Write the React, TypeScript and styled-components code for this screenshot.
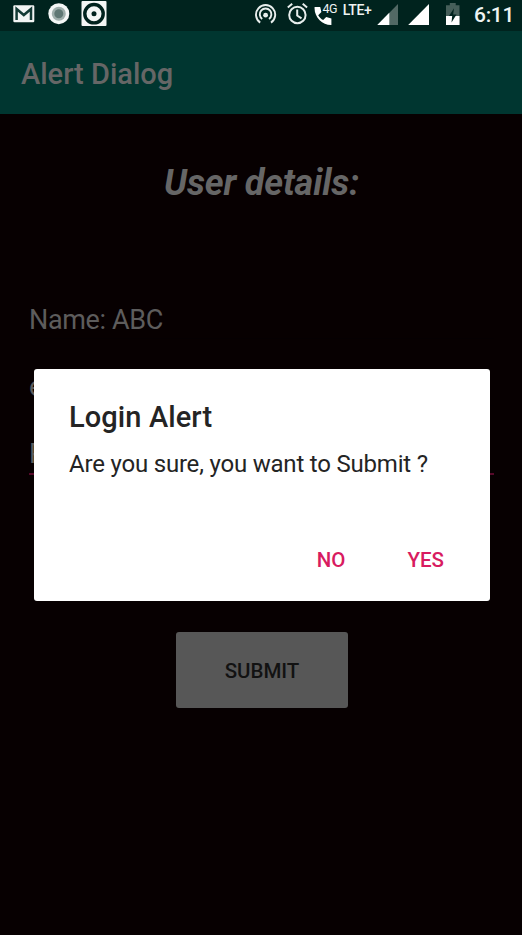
import React from 'react';
import styled, { createGlobalStyle } from 'styled-components';

const GlobalStyle = createGlobalStyle`
  * { box-sizing: border-box; }
  body { margin: 0; background: #070001; font-family: Roboto, "Noto Sans", sans-serif; }
`;

const Screen = styled.div`
  position: relative;
  width: 522px;
  height: 935px;
  overflow: hidden;
  background: #070001;
`;

const StatusBar = styled.header`
  display: flex;
  height: 31px;
  background: #00231e;
  color: #eef3f2;
`;

const StatusIcon = styled.svg<{ $gap: number }>`
  display: block;
  flex: none;
  height: 31px;
  margin-left: ${p => p.$gap}px;
`;

const StatusLabel = styled.span<{ $size: number; $gap: number; $top: number; $spacing?: number; $weight?: number }>`
  margin-left: ${p => p.$gap}px;
  padding-top: ${p => p.$top}px;
  font-size: ${p => p.$size}px;
  font-weight: ${p => p.$weight ?? 500};
  letter-spacing: ${p => p.$spacing ?? 0}px;
  line-height: 1;
  white-space: nowrap;
`;

const Cluster = styled.div<{ $width: number }>`
  display: flex;
  flex: none;
  width: ${p => p.$width}px;
`;

const AppBar = styled.div`
  display: flex;
  align-items: center;
  height: 83px;
  padding: 2px 21px 0;
  background: #003630;
`;

const AppTitle = styled.h1`
  margin: 0;
  color: #666;
  font-size: 29px;
  font-weight: 500;
  line-height: 34px;
`;

const Content = styled.main`
  display: flex;
  flex-direction: column;
  align-items: center;
  padding: 46px 28px 0 29px;
`;

const Heading = styled.h2`
  margin: 0 0 86px;
  color: #666;
  font-size: 36px;
  font-style: italic;
  font-weight: 700;
  letter-spacing: -0.15px;
  line-height: 46px;
`;

const Field = styled.div<{ $focused?: boolean }>`
  width: 100%;
  height: 67px;
  padding-top: 11px;
  color: #5d5c5c;
  font-size: 27px;
  letter-spacing: -0.35px;
  line-height: 34px;
  &::after {
    content: "";
    display: block;
    height: ${p => (p.$focused ? 2 : 1)}px;
    margin-top: ${p => (p.$focused ? 2 : 1)}px;
    background: ${p => (p.$focused ? '#57092a' : '#050002')};
  }
`;

const SubmitButton = styled.button`
  width: 172px;
  height: 76px;
  margin: 139px 0 0 1px;
  padding: 2px 0 0;
  border: 0;
  border-radius: 3px;
  background: #575757;
  color: #121212;
  font: 500 20.5px Roboto, sans-serif;
`;

const Dialog = styled.section`
  position: absolute;
  top: 369px;
  left: 34px;
  width: 456px;
  height: 232px;
  padding: 31px 35px 0;
  border-radius: 3px;
  background: #fff;
  color: #242424;
`;

const DialogTitle = styled.h2`
  margin: 0;
  font-size: 29px;
  font-weight: 500;
  letter-spacing: 0.1px;
  line-height: 34px;
`;

const Message = styled.p`
  margin: 14px 0 0;
  font-size: 24px;
  letter-spacing: -0.2px;
  line-height: 32px;
  white-space: nowrap;
`;

const Actions = styled.div`
  display: flex;
  justify-content: flex-end;
  gap: 62px;
  margin-top: 65px;
  padding-right: 11px;
`;

const Action = styled.button`
  padding: 0;
  border: 0;
  background: none;
  color: #d81b60;
  font: 500 20.5px/30px Roboto, sans-serif;
`;

const MailIcon = () => (
  <StatusIcon $gap={13} width="22" viewBox="0 0 22 31">
    <rect x="0.3" y="5.2" width="21" height="17" rx="1.2" fill="#f2f5f4" />
    <path d="M3.6 20V9l7.2 6 7.2-6v11" fill="none" stroke="#123a34" strokeWidth="2.5" />
  </StatusIcon>
);

const CircleIcon = () => (
  <StatusIcon $gap={13} width="22" viewBox="0 0 22 31">
    <circle cx="10.8" cy="13.7" r="10.5" fill="#f4f7f6" />
    <circle cx="10.8" cy="13.7" r="7" fill="#9fafac" />
    <circle cx="10.8" cy="13.7" r="4.5" fill="#5f7874" />
  </StatusIcon>
);

const DiscIcon = () => (
  <StatusIcon $gap={11} width="26" viewBox="0 0 26 31">
    <rect x="0.5" y="1" width="25" height="25" rx="1" fill="#f4f7f6" />
    <circle cx="13" cy="13.7" r="9.2" fill="none" stroke="#00231e" strokeWidth="3.4" />
    <circle cx="13" cy="13.7" r="2.5" fill="#00231e" />
  </StatusIcon>
);

const HotspotIcon = () => (
  <StatusIcon $gap={0} width="22" viewBox="0 0 22 31">
    <g fill="none" stroke="#e8eeed" strokeWidth="1.9">
      <path d="M5.2 22.6A9.6 9.6 0 1 1 16 22.6" />
      <path d="M7.2 19A5.8 5.8 0 1 1 14 19" />
    </g>
    <circle cx="10.6" cy="15.2" r="2.4" fill="#e8eeed" />
  </StatusIcon>
);

const AlarmIcon = () => (
  <StatusIcon $gap={10} width="22" viewBox="0 0 22 31">
    <g fill="none" stroke="#e8eeed" strokeWidth="2">
      <circle cx="10.4" cy="15" r="8.2" />
      <path d="M10.2 9.5v6l4.3 2.8M.8 7.4l4.4-3.6M15.7 3.8L20.1 7.4" />
    </g>
  </StatusIcon>
);

const CallIcon = () => (
  <StatusIcon $gap={5} width="18" viewBox="0 0 18 31">
    <path
      d="M.6 7h5.6l1.2 5-3.2 3.2c1.3 2.2 2.8 3.7 5 4.9l3-3 5.2 1.3V25C8.6 25.3-.2 17.2.6 7z"
      fill="#fff"
    />
  </StatusIcon>
);

const WeakSignalIcon = () => (
  <StatusIcon $gap={0} width="22" viewBox="0 0 22 31">
    <path d="M0.3 25L21 4v21z" fill="#526965" />
    <path d="M0.3 25L12.3 12.8V25z" fill="#fff" />
  </StatusIcon>
);

const SignalIcon = () => (
  <StatusIcon $gap={9} width="22" viewBox="0 0 22 31">
    <path d="M0.2 25L21 4v21z" fill="#fff" />
  </StatusIcon>
);

const BatteryIcon = () => (
  <StatusIcon $gap={15} width="16" viewBox="0 0 16 31">
    <path d="M1 5.2h3.8V3h5.9v2.2h3.8V25H1z" fill="#465f5a" />
    <path d="M1 16h13.5v9H1z" fill="#fff" />
    <path d="M9 8.2L4 16h3.2l-.7 6.4 5-8H8.2z" fill="#00231e" />
  </StatusIcon>
);

export default function App() {
  return (
    <Screen>
      <GlobalStyle />
      <StatusBar>
        <Cluster $width={255}>
          <MailIcon />
          <CircleIcon />
          <DiscIcon />
        </Cluster>
        <Cluster $width={122}>
          <HotspotIcon />
          <AlarmIcon />
          <CallIcon />
          <StatusLabel $size={12.5} $gap={-9.5} $top={3} $weight={400} $spacing={-0.6}>4G</StatusLabel>
          <StatusLabel $size={14} $gap={6} $top={3} $spacing={-0.4}>LTE+</StatusLabel>
        </Cluster>
        <WeakSignalIcon />
        <SignalIcon />
        <BatteryIcon />
        <StatusLabel $size={21} $gap={13} $top={5} $spacing={-0.3}>6:11</StatusLabel>
      </StatusBar>
      <AppBar>
        <AppTitle>Alert Dialog</AppTitle>
      </AppBar>
      <Content>
        <Heading>User details:</Heading>
        <Field>Name: ABC</Field>
        <Field>e</Field>
        <Field $focused>P</Field>
        <SubmitButton>SUBMIT</SubmitButton>
      </Content>
      <Dialog role="alertdialog">
        <DialogTitle>Login Alert</DialogTitle>
        <Message>Are you sure, you want to Submit ?</Message>
        <Actions>
          <Action>NO</Action>
          <Action>YES</Action>
        </Actions>
      </Dialog>
    </Screen>
  );
}
